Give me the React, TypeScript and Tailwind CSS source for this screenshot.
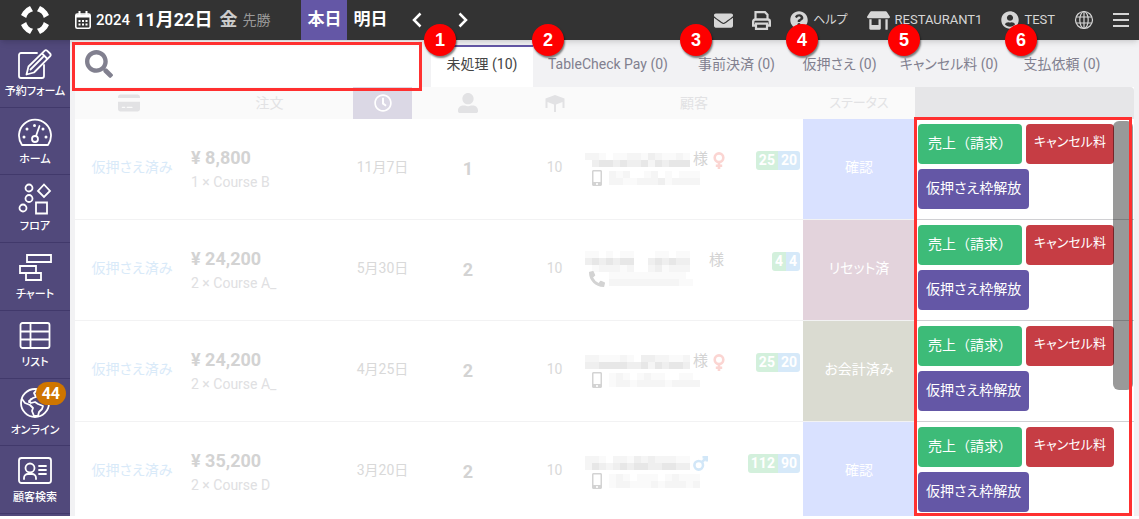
import type { ReactNode } from "react";
import clsx from "clsx";
import {
  FaEnvelope,
  FaMobileAlt,
  FaPhoneAlt,
  FaQuestionCircle,
  FaRegClock,
  FaSearch,
  FaStoreAlt,
  FaUserAlt,
  FaUserCircle,
} from "react-icons/fa";
import { FaCreditCard } from "react-icons/fa6";

type Reservation = {
  price: string;
  course: string;
  date: string;
  people: number;
  name: string[];
  phone: string[];
  phoneType: "mobile" | "landline";
  honorific: boolean;
  gender?: "female" | "male";
  visits: [number, number];
  status: string;
  statusClass: string;
};

const RESERVATIONS: Reservation[] = [
  {
    price: "¥ 8,800",
    course: "1 × Course B",
    date: "11月7日",
    people: 1,
    name: ["221011221321121", "034434334243444"],
    phone: ["2120012010111", "2211222312222"],
    phoneType: "mobile",
    honorific: true,
    gender: "female",
    visits: [25, 20],
    status: "確認",
    statusClass: "bg-[#d9e1ff]",
  },
  {
    price: "¥ 24,200",
    course: "2 × Course A_",
    date: "5月30日",
    people: 2,
    name: ["110101100011011", "343434400343433", "012221200231222"],
    phone: ["111111111110", "222222222211"],
    phoneType: "landline",
    honorific: true,
    visits: [4, 4],
    status: "リセット済",
    statusClass: "bg-[#e3d3dc]",
  },
  {
    price: "¥ 24,200",
    course: "2 × Course A_",
    date: "4月25日",
    people: 2,
    name: ["221112103322112", "334444334243443"],
    phone: ["1210121100110", "1221222212222"],
    phoneType: "mobile",
    honorific: true,
    gender: "female",
    visits: [25, 20],
    status: "お会計済み",
    statusClass: "bg-[#dadbd1]",
  },
  {
    price: "¥ 35,200",
    course: "2 × Course D",
    date: "3月20日",
    people: 2,
    name: ["221022132322211", "243234344334433"],
    phone: ["1210111012111", "1221112122212"],
    phoneType: "mobile",
    honorific: false,
    gender: "male",
    visits: [112, 90],
    status: "確認",
    statusClass: "bg-[#d9e1ff]",
  },
];

const TABS = [
  { label: "未処理 (10)", width: "w-[102px]", active: true },
  { label: "TableCheck Pay (0)", width: "w-[150px]" },
  { label: "事前決済 (0)", width: "w-[107px]" },
  { label: "仮押さえ (0)", width: "w-[99px]" },
  { label: "キャンセル料 (0)", width: "w-[120px]" },
  { label: "支払依頼 (0)", width: "w-[106px]" },
];

const MARKERS = [
  "left-[424px]",
  "left-[532px]",
  "left-[680px]",
  "left-[786px]",
  "left-[888px]",
  "left-[1005px]",
];

const SHADES = ["#ffffff", "#fafafa", "#f5f5f5", "#efefef", "#e7e7e7"];

function Mosaic({ rows }: { rows: string[] }) {
  const width = rows[0].length * 7;
  const height = rows.length * 7;
  return (
    <svg width={width} height={height} className="shrink-0" shapeRendering="crispEdges">
      {rows.map((row, y) =>
        row.split("").map((shade, x) => (
          <rect key={`${x}-${y}`} x={x * 7} y={y * 7} width="7" height="7" fill={SHADES[Number(shade)]} />
        ))
      )}
    </svg>
  );
}

function Logo() {
  return (
    <svg width="28" height="28" viewBox="0 0 28 28" fill="#fff">
      {[0, 90, 180, 270].map((angle) => (
        <path
          key={angle}
          d="M0 9 2 5.500 5.500 2 9 0 12 5.200A9.200 9.200 0 0 0 5.200 12z"
          transform={`rotate(${angle} 14 14)`}
        />
      ))}
    </svg>
  );
}

function CalendarIcon() {
  return (
    <svg width="16" height="18" viewBox="0 0 16 18" fill="none" stroke="currentColor" strokeWidth="1.600">
      <rect x="0.800" y="3" width="14.400" height="14.200" rx="1.500" />
      <path d="M1 5h14" strokeWidth="3" />
      <path d="M4.500 0v4M11.500 0v4" strokeWidth="2" />
      <path d="M3.500 10h2M7 10h2M10.500 10h2M3.500 13.500h2M7 13.500h2M10.500 13.500h2" strokeWidth="2.200" />
    </svg>
  );
}

function PrintIcon() {
  return (
    <svg width="19" height="19" viewBox="0 0 19 19" fill="none" stroke="currentColor" strokeWidth="2.200">
      <path d="M3.500 8V1.200h9.500l2.500 2.500V8" />
      <path d="M4 14.500H1.200V10.500a2 2 0 0 1 2-2h12.600a2 2 0 0 1 2 2v4H15" strokeWidth="2.400" />
      <path d="M4 12.600h11v5.200H4z" />
    </svg>
  );
}

function Chevron({ flip }: { flip?: boolean }) {
  return (
    <svg width="10" height="16" viewBox="0 0 10 16" fill="none" stroke="currentColor" strokeWidth="2.500">
      <path d={flip ? "M1.500 1.500 8 8l-6.500 6.500" : "M8.500 1.500 2 8l6.500 6.500"} />
    </svg>
  );
}

function GenderIcon({ gender }: { gender: "female" | "male" }) {
  if (gender === "female") {
    return (
      <svg width="12" height="17" viewBox="0 0 12 17" fill="none" stroke="#fbd5d2" strokeWidth="2.600">
        <circle cx="6" cy="5.700" r="4.300" />
        <path d="M6 10v7M2.800 13.700h6.400" />
      </svg>
    );
  }
  return (
    <svg width="15" height="15" viewBox="0 0 15 15" fill="none" stroke="#d2e7f8" strokeWidth="2.600">
      <circle cx="5.700" cy="9.300" r="4.300" />
      <path d="M8.700 6.300 13.500 1.500M9.500 1.200h4.300v4.300" />
    </svg>
  );
}

function SideIcon({ children }: { children: ReactNode }) {
  return (
    <svg
      width="34"
      height="32"
      viewBox="0 0 34 32"
      fill="none"
      stroke="#fff"
      strokeWidth="1.800"
      strokeLinecap="round"
      strokeLinejoin="round"
    >
      {children}
    </svg>
  );
}

const NAV_ITEMS: { label: string; badge?: number; icon: ReactNode }[] = [
  {
    label: "予約フォーム",
    icon: (
      <SideIcon>
        <path d="M19 5H3a2 2 0 0 0-2 2v21a2 2 0 0 0 2 2h21a2 2 0 0 0 2-2V17" />
        <path d="M8.500 26.500l2-8L26.500 2.800a2 2 0 0 1 2.800 0l2.700 2.700a2 2 0 0 1 0 2.800L16 24.500zM24 5.500l5.500 5.500M12.500 21.500 25 9" />
      </SideIcon>
    ),
  },
  {
    label: "ホーム",
    icon: (
      <SideIcon>
        <path d="M4 29A16 16 0 1 1 30 29z" />
        <circle cx="17" cy="23" r="3" />
        <path d="M18 20l3.500-10" />
        <g fill="#fff" stroke="none">
          <circle cx="6" cy="21" r="1.500" />
          <circle cx="9" cy="13" r="1.500" />
          <circle cx="16.500" cy="9.500" r="1.500" />
          <circle cx="25" cy="13" r="1.500" />
          <circle cx="28" cy="21" r="1.500" />
        </g>
      </SideIcon>
    ),
  },
  {
    label: "フロア",
    icon: (
      <SideIcon>
        <circle cx="11" cy="5" r="3.500" />
        <circle cx="11" cy="15.500" r="3.500" />
        <circle cx="5" cy="25" r="3.500" />
        <path d="M26 1.500 32 8l-6 6-6-6zM18 19.500h11v11H18z" strokeLinejoin="miter" />
      </SideIcon>
    ),
  },
  {
    label: "チャート",
    icon: (
      <SideIcon>
        <path d="M9 4h24v7H9zM2 15h16v7H2zM8 22h15v7H8z" strokeLinejoin="miter" />
      </SideIcon>
    ),
  },
  {
    label: "リスト",
    icon: (
      <SideIcon>
        <rect x="2.500" y="4" width="29" height="25" rx="2" />
        <path d="M3 12.500h28M3 20.500h28M12.500 4v25" />
      </SideIcon>
    ),
  },
  {
    label: "オンライン",
    badge: 44,
    icon: (
      <SideIcon>
        <circle cx="17" cy="16" r="14" />
        <path d="M4 12l3 4 5 2 3 3-1 3 2 5h4l1-4 3-3 1-3-5-2-3-2-4 1-2-2 4-3 3-1-2-4 3-3M11 15l2-3" />
      </SideIcon>
    ),
  },
  {
    label: "顧客検索",
    icon: (
      <SideIcon>
        <rect x="1" y="4" width="32" height="25" rx="2.500" />
        <circle cx="12" cy="14" r="4.500" />
        <path d="M6 25v-1a4 4 0 0 1 4-4h4a4 4 0 0 1 4 4v1M21 12h7M21 16h7M21 20h7" />
      </SideIcon>
    ),
  },
];

function TopBar() {
  return (
    <header className="relative flex h-10 items-center bg-[#333] text-white shadow-md">
      <a href="#" aria-label="TableCheck" className="flex w-[70px] justify-center">
        <Logo />
      </a>
      <div className="ml-[5px] flex items-center">
        <CalendarIcon />
        <span className="ml-[5px] text-[15px] font-medium">2024</span>
        <span className="ml-[5px] text-lg font-bold">11月22日</span>
        <span className="ml-[7px] text-lg font-bold text-[#ccc]">金</span>
        <span className="ml-[5px] text-sm text-[#999]">先勝</span>
      </div>
      <button className="ml-[31px] h-10 w-[46px] bg-[#6457a6] text-[17px] font-bold">本日</button>
      <button className="h-10 w-[46px] text-[17px] font-bold">明日</button>
      <button aria-label="前日" className="ml-[16px] flex h-10 w-[16px] items-center justify-center">
        <Chevron />
      </button>
      <button aria-label="翌日" className="ml-[30px] flex h-10 w-[16px] items-center justify-center">
        <Chevron flip />
      </button>
      <div className="ml-auto flex items-center gap-[19px] pr-2.5 text-[13px] text-[#d6d6d6]">
        <button aria-label="メール">
          <FaEnvelope size={19} />
        </button>
        <button aria-label="印刷">
          <PrintIcon />
        </button>
        <button className="flex items-center gap-[5px]">
          <FaQuestionCircle size={18} />
          <span className="text-xs">ヘルプ</span>
        </button>
        <button className="flex items-center gap-[5px]">
          <FaStoreAlt size={23} />
          RESTAURANT1
        </button>
        <button className="flex items-center gap-[5px]">
          <FaUserCircle size={18} />
          TEST
        </button>
        <button aria-label="言語">
          <svg width="20" height="20" viewBox="0 0 20 20" fill="none" stroke="currentColor" strokeWidth="1.200">
            <circle cx="10" cy="10" r="8.500" />
            <ellipse cx="10" cy="10" rx="4.200" ry="8.500" />
            <path d="M10 1.500v17M2 7h16M2 13h16" />
          </svg>
        </button>
        <button aria-label="メニュー">
          <svg width="16" height="16" viewBox="0 0 16 16" stroke="currentColor" strokeWidth="2">
            <path d="M0 2h16M0 8h16M0 14h16" />
          </svg>
        </button>
      </div>
    </header>
  );
}

function Sidebar() {
  return (
    <nav className="flex w-[70px] shrink-0 flex-col bg-[#51497b] pb-[2px]">
      {NAV_ITEMS.map((item) => (
        <a
          key={item.label}
          href="#"
          className="relative flex flex-1 flex-col items-center border-b border-[#41396b] pt-2 text-[11px] leading-6 font-medium whitespace-nowrap text-white"
        >
          {item.icon}
          {item.label}
          {item.badge && (
            <span className="absolute top-[3px] right-1 rounded-full bg-[#cf7500] px-[6px] text-base leading-[23px] font-bold">
              {item.badge}
            </span>
          )}
        </a>
      ))}
    </nav>
  );
}

function Toolbar() {
  return (
    <div className="flex h-[47px] items-end">
      <div className="ml-[2px] flex h-[46px] w-[349px] shrink-0 items-center">
        <label className="flex h-full w-full items-center rounded bg-white pl-[13px]">
          <FaSearch size={28} className="text-[#81808f]" />
          <input type="search" aria-label="検索" className="min-w-0 flex-1 px-2 outline-none" />
        </label>
      </div>
      <div role="tablist" className="ml-[10px] flex">
        {TABS.map((tab) => (
          <button
            key={tab.label}
            role="tab"
            aria-selected={!!tab.active}
            className={clsx(
              "h-[42px] border-t-2 pb-1.5 text-sm whitespace-nowrap",
              tab.width,
              tab.active ? "border-[#6457a6] bg-white text-[#444]" : "border-transparent text-[#81808f]"
            )}
          >
            {tab.label}
          </button>
        ))}
      </div>
    </div>
  );
}

function TableIcon() {
  return (
    <svg width="20" height="18" viewBox="0 0 20 18" fill="currentColor" className="mx-auto">
      <path d="M10 1 19.500 4.500V14h-2V8L11 10.500V18H9v-7.500L2.500 8v6h-2V4.500z" />
    </svg>
  );
}

function ReservationRow({ item }: { item: Reservation }) {
  const cell = "border-b border-[#f2f2f3] p-0 group-last:border-b-0";
  const action = "h-10 rounded pb-[3px] text-white";
  return (
    <tr className="group h-[101px] align-top last:h-[94px]">
      <td className={clsx(cell, "pt-[38px] pl-[7px] text-center")}>
        <a href="#" className="text-[#d9eaf9]">仮押さえ済み</a>
      </td>
      <td className={clsx(cell, "pt-[27px] pl-[9px] leading-6")}>
        <p className="text-lg leading-6 font-bold text-[#d3d3d3]">{item.price}</p>
        <p className="text-[#e0e0e2]">{item.course}</p>
      </td>
      <td className={clsx(cell, "pt-[38px] text-center text-[#d9d9d9]")}>{item.date}</td>
      <td className={clsx(cell, "pt-10 text-center text-lg leading-5 font-bold text-[#d3d3d3]")}>{item.people}</td>
      <td className={clsx(cell, "pt-[38px] text-center text-[#d9d9d9]")}>10</td>
      <td className={clsx(cell, "pt-8")}>
        <div className="flex justify-between pr-[3px]">
          <div>
            <div className="flex h-[18px] items-center gap-[3px] text-[15px] text-[#d3d3d3]">
              <Mosaic rows={item.name} />
              {item.honorific && <span className={item.gender ? "pr-0.5" : "pl-4"}>様</span>}
              {item.gender && <GenderIcon gender={item.gender} />}
            </div>
            <div className="flex h-[18px] items-center gap-1 text-[#d3d3d3]">
              <span className="flex w-5 justify-end">
                {item.phoneType === "mobile" ? <FaMobileAlt size={16} /> : <FaPhoneAlt size={16} />}
              </span>
              <Mosaic rows={item.phone} />
            </div>
          </div>
          <div className="flex h-[19px] overflow-hidden rounded-[3px] text-sm leading-[19px] font-bold text-white">
            <span className="bg-[#d3f0dc] px-[3px]">{item.visits[0]}</span>
            <span className="bg-[#d6e9f9] px-[3px]">{item.visits[1]}</span>
          </div>
        </div>
      </td>
      <td className={clsx(cell, item.statusClass, "pt-[38px] text-center text-white")}>{item.status}</td>
      <td className="border-b border-[#d0d0d3] p-0 pt-[5px] pl-[3px] group-last:border-b-0">
        <div className="flex flex-wrap gap-x-1 gap-y-[5px]">
          <button className={clsx(action, "bg-[#3dbb78] px-2.5 [font-feature-settings:normal]")}>売上（請求）</button>
          <button className={clsx(action, "bg-[#c63d44] px-2 text-[13px]")}>キャンセル料</button>
          <button className={clsx(action, "bg-[#6457a6] px-2")}>仮押さえ枠解放</button>
        </div>
      </td>
    </tr>
  );
}

function ReservationTable() {
  return (
    <div className="mx-[5px] bg-white">
      <table className="w-full table-fixed border-separate border-spacing-0 text-sm">
        <colgroup>
          <col className="w-[107px]" />
          <col className="w-[171px]" />
          <col className="w-[59px]" />
          <col className="w-[112px]" />
          <col className="w-[61px]" />
          <col />
          <col className="w-[112px]" />
          <col className="w-[219px]" />
        </colgroup>
        <thead>
          <tr className="h-8 bg-[#fafafa] text-[#e2e2e4] *:p-0 *:font-normal">
            <th aria-label="決済">
              <FaCreditCard size={22} className="mx-auto" />
            </th>
            <th>
              <span className="pl-1">注文</span>
            </th>
            <th aria-label="時間" className="bg-[#dbd8e5] text-white">
              <FaRegClock size={18} className="mx-auto" />
            </th>
            <th aria-label="人数">
              <FaUserAlt size={20} className="mx-auto" />
            </th>
            <th aria-label="テーブル">
              <TableIcon />
            </th>
            <th>顧客</th>
            <th className="text-[13px]">ステータス</th>
            <th aria-label="操作" className="rounded-tr bg-[#e6e6e8]" />
          </tr>
        </thead>
        <tbody>
          {RESERVATIONS.map((item, index) => (
            <ReservationRow key={index} item={item} />
          ))}
        </tbody>
      </table>
    </div>
  );
}

function Markers() {
  return (
    <div className="pointer-events-none">
      <div className="absolute top-[42px] left-[72px] h-[49px] w-[350px] border-[3px] border-[#ff3030]" />
      <div className="absolute top-[117px] right-[7px] bottom-0 w-[218px] border-[3px] border-[#ff3030]" />
      {MARKERS.map((left, index) => (
        <span
          key={left}
          className={clsx(
            "absolute top-6 flex size-8 items-center justify-center rounded-full bg-[#fe0000] font-['Liberation_Sans'] text-lg font-bold text-white shadow-[1px_2px_2px_rgba(0,0,0,0.5)]",
            left
          )}
        >
          {index + 1}
        </span>
      ))}
    </div>
  );
}

export default function App() {
  return (
    <div className="relative bg-white font-['Roboto','Noto_Sans_CJK_JP',sans-serif] [font-feature-settings:'palt']">
      <TopBar />
      <div className="flex">
        <Sidebar />
        <main className="min-w-0 flex-1 bg-[#f2f2f4]">
          <Toolbar />
          <ReservationTable />
        </main>
      </div>
      <div className="absolute top-[121px] right-[6px] h-[269px] w-5 rounded-md bg-black/40" />
      <Markers />
    </div>
  );
}
